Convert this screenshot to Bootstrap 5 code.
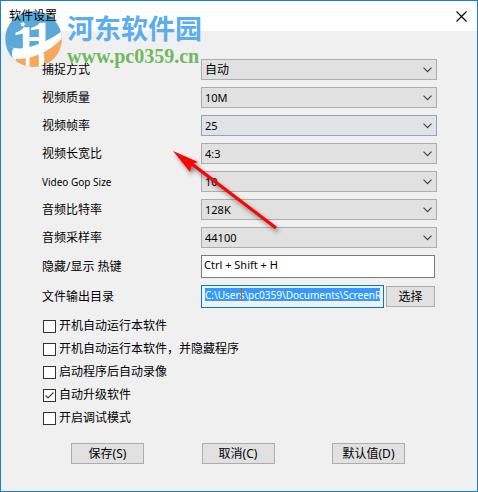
<!DOCTYPE html>
<html lang="zh-CN">
<head>
<meta charset="utf-8">
<meta name="viewport" content="width=device-width, initial-scale=1">
<title>软件设置</title>
<link href="https://cdn.jsdelivr.net/npm/bootstrap@5.3.0/dist/css/bootstrap.min.css" rel="stylesheet">
<style>
body { font-family: "Noto Sans", "Noto Sans CJK SC", sans-serif; font-size: 12px; line-height: 16px; color: #000; }
.dialog { min-height: 100vh; background: #f0f0f0; border: 1px solid #1a7fd4; }
.titlebar { height: 30px; background: #fff; padding: 0 9px 0 8px; }
.titlebar h1 { font-size: 12px; line-height: 16px; }
.close-btn { width: 13px; height: 13px; }
.layer { z-index: 1; }
.settings { padding: 28px 40px 0 41px; }
.fields { gap: 7px; }
.field label { width: 159px; }
.field .latin { font-size: 10px; }
.form-select.combo { height: 21px; padding: 0 20px 0 3px; border: 1px solid #adadad; border-radius: 0; color: #000; font-size: 11px; line-height: 19px;
  background: #e1e1e1 url("data:image/svg+xml,%3Csvg xmlns='http://www.w3.org/2000/svg' viewBox='0 0 9 6'%3E%3Cpath d='M.5 .7 4.5 4.7 8.5 .7' fill='none' stroke='%23444' stroke-width='1.2'/%3E%3C/svg%3E") no-repeat right 4px center / 9px 6px; }
.form-select.combo.zh { font-size: 12px; }
.form-select.combo.hot { border-color: #94a4b8; background-color: #e0e4e8; }
.form-control.box { height: 23px; padding: 0 2px 4px; border: 1px solid #7a7a7a; border-radius: 0; color: #000; font-size: 11px; line-height: 17px; }
.form-control.box.picked { padding: 2px 3px 6px; border-color: #0078d7; color: #fff; background: linear-gradient(#39f, #39f) content-box no-repeat #fff; font-size: 10px; line-height: 13px; }
.extra { padding-right: 2px; }
.folder-wrap { margin-right: 2px; }
.caret { position: absolute; left: 40px; top: 3px; width: 1px; height: 13px; background: #c86400; }
.push { height: 21px; width: 73px; padding: 0; border: 1px solid #adadad; border-radius: 0; background: #e1e1e1; color: #000; font-size: 12px; line-height: 18px; }
.push.choose { width: 49px; }
.checks { gap: 7px; padding: 10px 0 0 1px; }
.check-row { gap: 3px; }
.checks .form-check-input { width: 13px; height: 13px; border: 1px solid #333; border-radius: 0; margin: 0; background-color: #fff; }
.checks .form-check-input:checked { background: #fff url("data:image/svg+xml,%3Csvg xmlns='http://www.w3.org/2000/svg' viewBox='0 0 11 11'%3E%3Cpath d='M1.5 5.5 4 8 9.5 2.5' fill='none' stroke='%23444' stroke-width='1.2'/%3E%3C/svg%3E") center / 11px 11px no-repeat; }
.actions { padding: 17px 32px 20px 29px; }
.watermark { position: absolute; left: 4px; top: 10px; z-index: 0; }
.site { padding: 1px 0 0 5px; }
.site-name { font-family: "Noto Sans CJK SC", sans-serif; font-weight: 700; font-size: 27px; line-height: 32px; color: #5badee; }
.site-url { font-family: "Liberation Serif", serif; font-weight: 700; font-size: 20px; line-height: 25px; color: #70b862; }
.pointer { position: absolute; left: 165px; top: 143px; z-index: 2; pointer-events: none; filter: drop-shadow(2px 3px 2px rgba(0,0,0,.45)); }
</style>
</head>
<body>
<main class="dialog position-relative d-flex flex-column">
  <header class="titlebar d-flex align-items-center justify-content-between">
    <h1 class="m-0 fw-normal position-relative layer">软件设置</h1>
    <button type="button" class="close-btn btn p-0 border-0 d-flex align-items-center justify-content-center" aria-label="关闭">
      <svg width="11" height="11" viewBox="0 0 11 11"><path d="M.5 .5 10.5 10.5M10.5 .5 .5 10.5" stroke="#000" stroke-width="1.1"/></svg>
    </button>
  </header>

  <div class="watermark d-flex" aria-hidden="true">
    <svg width="57" height="56" viewBox="0 0 170 168">
      <defs><clipPath id="disc"><ellipse cx="85" cy="84" rx="85" ry="84"/></clipPath></defs>
      <g clip-path="url(#disc)">
        <rect width="170" height="168" fill="#5aa9d9"/>
        <path d="M0 92C14 122 82 124 172 60V168H0Z" fill="#fff"/>
        <path d="M0 92C2 112 10 130 24 144 18 128 20 118 26 111 14 107 6 100 0 92Z" fill="#5aa9d9"/>
        <path d="M32 144C84 144 134 122 172 80V168H32Z" fill="#f4a95b"/>
        <path d="M31 65C42 62 50 56 56 49H73V114H53V68L31 72Z" fill="#fff"/>
        <path d="M78 50C90 47 98 42 104 35H121V104L101 112V54L78 58ZM73 78H101V90H73Z" fill="#fff"/>
        <path d="M62 138H73V168H62ZM101 126H117V168H101Z" fill="#fff"/>
        <path d="M54 31 56 37 62 39 57 42 57 48 52 44 47 46 49 41 45 36 51 36Z" fill="#fff"/>
      </g>
    </svg>
    <div class="site">
      <div class="site-name">河东软件园</div>
      <div class="site-url">www.pc0359.cn</div>
    </div>
  </div>

  <form class="settings position-relative layer">
    <div class="fields d-flex flex-column">
      <div class="field d-flex align-items-center"><label for="capture" class="flex-shrink-0">捕捉方式</label><select id="capture" class="form-select combo zh"><option>自动</option></select></div>
      <div class="field d-flex align-items-center"><label for="quality" class="flex-shrink-0">视频质量</label><select id="quality" class="form-select combo"><option>10M</option></select></div>
      <div class="field d-flex align-items-center"><label for="fps" class="flex-shrink-0">视频帧率</label><select id="fps" class="form-select combo hot"><option>25</option></select></div>
      <div class="field d-flex align-items-center"><label for="ratio" class="flex-shrink-0">视频长宽比</label><select id="ratio" class="form-select combo"><option>4:3</option></select></div>
      <div class="field d-flex align-items-center"><label for="gop" class="latin flex-shrink-0">Video Gop Size</label><select id="gop" class="form-select combo"><option>10</option></select></div>
      <div class="field d-flex align-items-center"><label for="bitrate" class="flex-shrink-0">音频比特率</label><select id="bitrate" class="form-select combo"><option>128K</option></select></div>
      <div class="field d-flex align-items-center"><label for="sample" class="flex-shrink-0">音频采样率</label><select id="sample" class="form-select combo"><option>44100</option></select></div>
      <div class="field extra d-flex align-items-center"><label for="hotkey" class="flex-shrink-0">隐藏/显示 热键</label><input id="hotkey" type="text" class="form-control box" value="Ctrl + Shift + H"></div>
      <div class="field extra d-flex align-items-center"><label for="folder" class="flex-shrink-0">文件输出目录</label>
        <div class="folder-wrap position-relative flex-grow-1"><input id="folder" type="text" class="form-control box picked" value="C:\Users\pc0359\Documents\ScreenRecorder"><span class="caret"></span></div>
        <button type="button" class="btn push choose flex-shrink-0">选择</button></div>
    </div>
    <div class="checks d-flex flex-column">
      <div class="check-row d-flex align-items-center"><input class="form-check-input" type="checkbox" id="c1"><label for="c1">开机自动运行本软件</label></div>
      <div class="check-row d-flex align-items-center"><input class="form-check-input" type="checkbox" id="c2"><label for="c2">开机自动运行本软件，并隐藏程序</label></div>
      <div class="check-row d-flex align-items-center"><input class="form-check-input" type="checkbox" id="c3"><label for="c3">启动程序后自动录像</label></div>
      <div class="check-row d-flex align-items-center"><input class="form-check-input" type="checkbox" id="c4" checked><label for="c4">自动升级软件</label></div>
      <div class="check-row d-flex align-items-center"><input class="form-check-input" type="checkbox" id="c5"><label for="c5">开启调试模式</label></div>
    </div>
    <div class="actions d-flex justify-content-between">
      <button type="button" class="btn push">保存(S)</button>
      <button type="button" class="btn push">取消(C)</button>
      <button type="button" class="btn push">默认值(D)</button>
    </div>
  </form>

  <svg class="pointer" width="120" height="95" viewBox="0 0 120 95" aria-hidden="true">
    <path d="M22 17 110 84" stroke="#fb0504" stroke-width="3.2"/>
    <path d="M7 7 32 18 26 20 24 28Z" fill="#fb0504"/>
  </svg>
</main>
<script src="https://cdn.jsdelivr.net/npm/bootstrap@5.3.0/dist/js/bootstrap.bundle.min.js"></script>
</body>
</html>
